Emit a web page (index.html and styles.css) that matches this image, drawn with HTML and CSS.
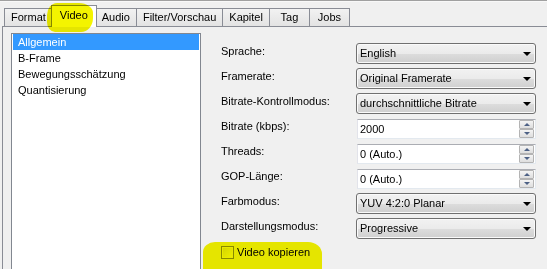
FILE: index.html
```html
<!DOCTYPE html>
<html lang="de">
<head>
    <meta charset="UTF-8">
    <title>Video-Einstellungen</title>
    <link rel="stylesheet" href="styles.css">
</head>
<body>
    <div class="window">
        <div class="tabs">
            <div class="tab">Format</div>
            <div class="tab active">Video</div>
            <div class="tab">Audio</div>
            <div class="tab">Filter/Vorschau</div>
            <div class="tab">Kapitel</div>
            <div class="tab">Tag</div>
            <div class="tab">Jobs</div>
        </div>
        <div class="panel">
            <ul class="pages">
                <li class="selected">Allgemein</li>
                <li>B-Frame</li>
                <li>Bewegungsschätzung</li>
                <li>Quantisierung</li>
            </ul>
            <div class="form">
                <div class="row">
                    <span class="label">Sprache:</span>
                    <div class="combo">English<span class="arrow"></span></div>
                </div>
                <div class="row">
                    <span class="label">Framerate:</span>
                    <div class="combo">Original Framerate<span class="arrow"></span></div>
                </div>
                <div class="row">
                    <span class="label">Bitrate-Kontrollmodus:</span>
                    <div class="combo">durchschnittliche Bitrate<span class="arrow"></span></div>
                </div>
                <div class="row">
                    <span class="label">Bitrate (kbps):</span>
                    <div class="spin"><span class="value">2000</span><span class="buttons"><i class="up"></i><i class="down"></i></span></div>
                </div>
                <div class="row">
                    <span class="label">Threads:</span>
                    <div class="spin"><span class="value">0 (Auto.)</span><span class="buttons"><i class="up"></i><i class="down"></i></span></div>
                </div>
                <div class="row">
                    <span class="label">GOP-Länge:</span>
                    <div class="spin"><span class="value">0 (Auto.)</span><span class="buttons"><i class="up"></i><i class="down"></i></span></div>
                </div>
                <div class="row">
                    <span class="label">Farbmodus:</span>
                    <div class="combo">YUV 4:2:0 Planar<span class="arrow"></span></div>
                </div>
                <div class="row">
                    <span class="label">Darstellungsmodus:</span>
                    <div class="combo">Progressive<span class="arrow"></span></div>
                </div>
                <label class="check"><span class="box"></span>Video kopieren</label>
            </div>
        </div>
        <!-- Textmarker-Markierungen -->
        <div class="mark mark-tab"></div>
        <div class="mark mark-check"></div>
    </div>
</body>
</html>
```

FILE: styles.css
```css
body {
    margin: 0;
    background-color: #f0f0f0;
    font-family: "Liberation Sans", Arial, sans-serif;
    font-size: 11px;
    color: #000;
    width: 547px;
    height: 269px;
    overflow: hidden;
}
.window {
    position: relative;
    height: 268px;
    border-top: 1px solid #a0a0a0;
    box-shadow: inset 0 1px 0 #f8f8f8;
}
.tabs {
    display: flex;
    align-items: flex-end;
    height: 25px;
    padding-left: 4px;
}
.tab {
    box-sizing: border-box;
    height: 18px;
    min-width: 40px;
    padding: 0 6px;
    line-height: 17px;
    text-align: center;
    border: 1px solid #898c95;
    border-bottom: none;
    border-left: none;
    background: linear-gradient(#f2f2f2, #e3e3e3);
    margin-bottom: 0;
}
.tab:first-child {
    border-left: 1px solid #898c95;
}
.tab.active {
    position: relative;
    z-index: 1;
    height: 22px;
    margin: 0 -1px -1px -2px;
    padding: 0 8px;
    line-height: 19px;
    border-left: 1px solid #898c95;
    background: #fff;
}
.panel {
    display: flex;
    margin-left: 2px;
    height: 241px;
    padding: 6px 0 0 8px;
    border-top: 1px solid #898c95;
    border-left: 1px solid #898c95;
}
.pages {
    list-style: none;
    margin: 0;
    padding: 0;
    width: 188px;
    height: 240px;
    border: 1px solid #828790;
    background-color: #fff;
}
.pages li {
    height: 16px;
    line-height: 16px;
    margin: 0 1px;
    padding-left: 5px;
}
.pages li.selected {
    background-color: #3399ff;
    color: #fff;
}
.form {
    margin-left: 20px;
    padding-top: 10px;
}
.row {
    display: flex;
    height: 25px;
}
.label {
    width: 135px;
    padding-top: 2px;
    line-height: 13px;
}
.combo {
    position: relative;
    box-sizing: border-box;
    width: 180px;
    height: 21px;
    padding-left: 3px;
    line-height: 19px;
    border: 1px solid #707070;
    border-radius: 3px;
    box-shadow: inset 0 0 0 1px #fafafa;
    background: linear-gradient(#f2f2f2 0%, #ebebeb 50%, #dddddd 51%, #cfcfcf 100%);
}
.arrow {
    position: absolute;
    right: 4px;
    top: 8px;
    border-left: 4px solid transparent;
    border-right: 4px solid transparent;
    border-top: 4px solid #000;
}
.spin {
    display: flex;
    box-sizing: border-box;
    width: 179px;
    height: 20px;
    margin: 1px 0 0 1px;
    border: 1px solid #abadb3;
    border-left-color: #e2e3ea;
    border-right-color: #e3e9ef;
    border-bottom-color: #e3e9ef;
    background-color: #fff;
}
.spin .value {
    flex: 1;
    padding-left: 2px;
    line-height: 18px;
}
.buttons {
    display: flex;
    flex-direction: column;
    width: 15px;
    margin: 0 1px 0 0;
}
.buttons i {
    position: relative;
    flex: 1;
    border: 1px solid #b4b4b4;
    border-radius: 1px;
    background: linear-gradient(#f4f4f4, #dedede);
}
.buttons i::after {
    content: "";
    position: absolute;
    left: 4px;
    top: 2px;
    border-left: 3px solid transparent;
    border-right: 3px solid transparent;
}
.buttons .up::after {
    border-bottom: 3px solid #4d6185;
}
.buttons .down::after {
    border-top: 3px solid #4d6185;
}
.check {
    display: flex;
    align-items: center;
    gap: 3px;
    margin-top: 3px;
    line-height: 13px;
}
.box {
    box-sizing: border-box;
    width: 13px;
    height: 13px;
    border: 1px solid #8e8f8f;
    background: linear-gradient(135deg, #dcdcdc, #fbfbfb);
    box-shadow: inset 0 0 0 1px #f4f4f4;
}
.mark {
    position: absolute;
    z-index: 5;
    background-color: #f4f400;
    mix-blend-mode: multiply;
}
.mark-tab {
    left: 47px;
    top: 2px;
    width: 46px;
    height: 29px;
    border-radius: 10px 14px 12px 8px / 12px 10px 14px 10px;
}
.mark-check {
    left: 203px;
    top: 241px;
    width: 119px;
    height: 32px;
    border-radius: 12px 14px 0 0 / 10px 12px 0 0;
}
```
